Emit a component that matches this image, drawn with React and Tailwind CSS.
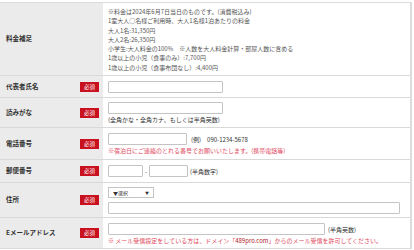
import React from 'react';

const font = { fontFamily: '"Noto Sans CJK JP", "Noto Sans", sans-serif' };

function Badge() {
  return (
    <span className="w-[19px] h-[10px] bg-[#c8101e] text-white text-[5.5px] leading-[10px] text-center shrink-0">必須</span>
  );
}

function Row({ label, required = true, children, pad = 'py-[5px]' }) {
  return (
    <div className="flex border-b border-[#d9d9d9]">
      <div className="w-[103px] shrink-0 bg-[#ebebeb] flex items-center justify-between pl-[6px] pr-[4px]">
        <span className="text-[6.5px] font-bold text-[#333]">{label}</span>
        {required && <Badge />}
      </div>
      <div className={`flex-1 bg-white pl-[5px] ${pad}`}>{children}</div>
    </div>
  );
}

const inputCls = 'h-[12px] border border-[#c4c4c4] rounded-[1px] bg-white';

export default function App() {
  const fees = [
    '※料金は2024年6月7日当日のものです。(消費税込み)',
    '1室大人○名様ご利用時、大人1名様1泊あたりの料金',
    '大人1名:31,350円',
    '大人2名:26,350円',
    '小学生:大人料金の100%　※人数を大人料金計算・部屋人数に含める',
    '1歳以上の小児（食事のみ）:7,700円',
    '1歳以上の小児（食事布団なし）:4,400円',
  ];

  return (
    <div className="w-[414px] h-[250px] bg-white overflow-hidden text-[#333]" style={font}>
      <div className="mt-[2px] w-[412px] border-t border-r-2 border-[#dcdcdc]">
        <Row label="料金補足" required={false} pad="pt-[4px] pb-[3px]">
          <div className="text-[6px] leading-[9.3px] text-[#555]">
            {fees.map((f, i) => (
              <div key={i} className="whitespace-nowrap">{f}</div>
            ))}
          </div>
        </Row>

        <Row label="代表者氏名" pad="pt-[5px] pb-[4px]">
          <div className={`${inputCls} w-[115px]`}></div>
        </Row>

        <Row label="読みがな" pad="pt-[4px] pb-[3px]">
          <div className={`${inputCls} w-[115px]`}></div>
          <div className="text-[6px] leading-[9px] mt-[1px] whitespace-nowrap">(全角かな・全角カナ、もしくは半角英数)</div>
        </Row>

        <Row label="電話番号" pad="pt-[5px] pb-[4px]">
          <div className="flex items-center gap-[4px]">
            <div className={`${inputCls} w-[79px]`}></div>
            <span className="text-[6px] whitespace-nowrap">(例)　090-1234-5678</span>
          </div>
          <div className="text-[6px] leading-[9px] mt-[1px] text-[#e0485c] whitespace-nowrap">※宿泊日にご連絡のとれる番号でお願いいたします。(携帯電話等)</div>
        </Row>

        <Row label="郵便番号" pad="py-[5px]">
          <div className="flex items-center">
            <div className={`${inputCls} w-[35px]`}></div>
            <span className="text-[6px] w-[6px] text-center">-</span>
            <div className={`${inputCls} w-[39px]`}></div>
            <span className="text-[6px] ml-[2px] whitespace-nowrap">(半角数字)</span>
          </div>
        </Row>

        <Row label="住所" pad="pt-[4px] pb-[3px]">
          <div className="w-[46px] h-[11px] border border-[#c4c4c4] bg-white flex items-center justify-between px-[4px] text-[5px]">
            <span>▼選択</span>
            <span className="text-[4px]">▼</span>
          </div>
          <div className={`${inputCls} w-[292px] mt-[4px]`}></div>
        </Row>

        <Row label="Eメールアドレス" pad="pt-[5px] pb-[3px]">
          <div className="flex items-center gap-[3px]">
            <div className={`${inputCls} w-[217px]`}></div>
            <span className="text-[6px] whitespace-nowrap">(半角英数)</span>
          </div>
          <div className="text-[6px] leading-[9px] mt-[1px] text-[#e0485c] whitespace-nowrap">
            ※ メール受信設定をしている方は、ドメイン「<span className="text-[#b0202a]">489pro.com</span>」からのメール受信を許可してください。
          </div>
        </Row>
      </div>
    </div>
  );
}
